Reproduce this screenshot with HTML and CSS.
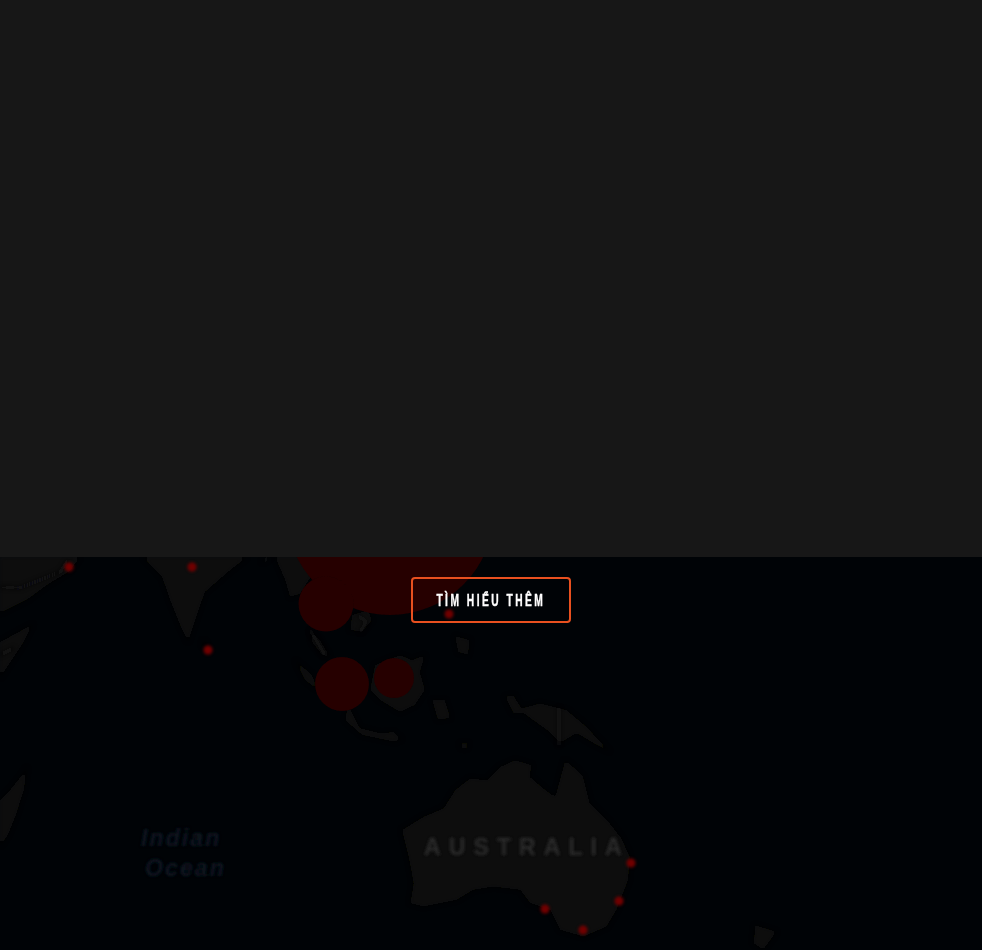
FILE: index.html
```html
<!DOCTYPE html>
<html lang="vi">
<head>
<meta charset="utf-8">
<title>Tìm hiểu thêm</title>
<link rel="stylesheet" href="styles.css">
</head>
<body>
<div class="panel"></div>
<section class="map-section">
  <svg class="map" viewBox="0 557 982 393" aria-hidden="true">
    <defs>
      <filter id="soft" filterUnits="userSpaceOnUse" x="-20" y="537" width="1022" height="433"><feGaussianBlur stdDeviation="2.2"/></filter>
      <filter id="tiny" filterUnits="userSpaceOnUse" x="-20" y="380" width="1022" height="590"><feGaussianBlur stdDeviation="0.7"/></filter>
      <filter id="softer" filterUnits="userSpaceOnUse" x="-20" y="537" width="1022" height="433"><feGaussianBlur stdDeviation="1.5"/></filter>
    </defs>
    <g class="land" filter="url(#soft)">
      <path d="M0 557H80L70 571 47 585 28 599 0 613Z"/>
      <path d="M0 642 33 624 22 645 8 666 0 678Z"/>
      <path d="M0 846V800L10 790 22 775 27 767 24 790 16 815 8 835Z"/>
      <path d="M143 557H247L228 572 205 592 197 615 188 642 180 625 170 600 162 577Z"/>
      <path d="M203 640 207 643 205 648 202 645Z"/>
      <path d="M275 557H320L312 575 300 594 290 597 285 580Z"/>
      <path d="M310 630 320 640 330 657 322 655 312 642Z"/>
      <path d="M295 660 312 675 318 690 305 680Z"/>
      <path d="M348 705 360 728 400 738 395 742 362 735 345 720Z"/>
      <path d="M370 690 380 700 400 712 415 705 425 690 420 672 425 655 412 660 400 655 375 665Z"/>
      <path d="M352 615 368 610 372 620 362 632 350 630Z"/>
      <path d="M432 700 445 700 450 718 438 720Z"/>
      <path d="M455 636 470 640 468 655 458 652Z"/>
      <g transform="translate(380 680) scale(.3333)">
        <path d="M65 450 130 410 190 385 225 330 270 295 320 300 360 260 405 240 455 255 450 290 490 325 525 350 555 240 585 265 610 290 630 370 690 430 725 475 750 530 745 600 710 690 680 740 610 770 540 750 510 690 450 670 420 630 340 620 280 630 230 660 130 680 90 670 100 610 85 530Z"/>
        <path d="M375 50 400 45 425 85 480 70 560 90 620 140 690 215 640 190 590 160 540 190 500 150 430 100 400 100Z"/>
        <path d="M5 160 40 155 65 180 25 180Z"/>
        <path d="M160 60 195 65 210 110 170 110Z"/>
        <path d="M240 190 265 190 260 205 245 205Z"/>
        <path d="M1125 735 1190 755 1150 810 1120 790Z"/>
      </g>
    </g>
    <g class="lines" filter="url(#soft)">
      <path d="M0 587 20 588 40 580 60 572 68 560"/>
      <path d="M0 655 14 648"/>
      <path d="M270 557 262 562"/>
      <path d="M310 630 325 655"/>
      <path d="M559 708V745"/>
      <path d="M358 615 366 622 360 632"/>
    </g>
    <g class="bubbles" filter="url(#tiny)">
      <circle cx="390" cy="511" r="104"/>
      <circle cx="326" cy="604" r="27.5"/>
      <circle cx="342" cy="684" r="27"/>
      <circle cx="394" cy="678" r="20"/>
    </g>
    <g class="dots" filter="url(#softer)">
      <circle cx="69" cy="567" r="4.5"/>
      <circle cx="192" cy="567" r="4.5"/>
      <circle cx="208" cy="650" r="4.5"/>
      <circle cx="449" cy="614" r="4.5"/>
      <circle cx="631" cy="863" r="4.5"/>
      <circle cx="619" cy="901" r="4.5"/>
      <circle cx="545" cy="909" r="4.5"/>
      <circle cx="583" cy="930" r="4.5"/>
    </g>
    <g filter="url(#softer)">
      <text class="label-country" x="424" y="855">AUSTRALIA</text>
      <text class="label-ocean" x="141" y="846">Indian</text>
      <text class="label-ocean" x="145" y="876">Ocean</text>
    </g>
  </svg>
  <a class="cta" href="#"><span class="cta-text">TÌM HIỂU THÊM</span></a>
</section>
</body>
</html>
```
FILE: styles.css
```css
html, body {
  margin: 0;
  padding: 0;
  height: 950px;
  overflow: hidden;
  background: #000306;
}
.panel {
  height: 557px;
  background: #171717;
}
.map-section {
  position: relative;
  height: 393px;
  display: flex;
  justify-content: center;
  align-items: flex-start;
  padding-top: 20px;
  box-sizing: border-box;
  background: #000306;
}
.map {
  position: absolute;
  left: 0;
  top: 0;
  width: 982px;
  height: 393px;
  display: block;
}
.land { fill: #0a0a09; }
.lines { fill: none; stroke: #131314; stroke-width: 2; }
.bubbles { fill: #250002; }
.dots { fill: #700004; }
.label-country {
  font: bold 23px "Liberation Sans", sans-serif;
  letter-spacing: 8.1px;
  fill: #2c2c2c;
}
.label-ocean {
  font: italic bold 23px "Liberation Sans", sans-serif;
  letter-spacing: 2.1px;
  fill: #0c1824;
}
.cta {
  position: relative;
  box-sizing: border-box;
  width: 160px;
  height: 46px;
  display: flex;
  align-items: center;
  justify-content: center;
  border: 2px solid #e8501f;
  border-radius: 4px;
  color: #fff;
  text-decoration: none;
  white-space: nowrap;
}
.cta-text {
  display: inline-block;
  font: bold 16.5px "Liberation Sans", sans-serif;
  letter-spacing: 4px;
  -webkit-text-stroke: 0.4px #fff;
  transform: scaleX(0.62);
}
```
